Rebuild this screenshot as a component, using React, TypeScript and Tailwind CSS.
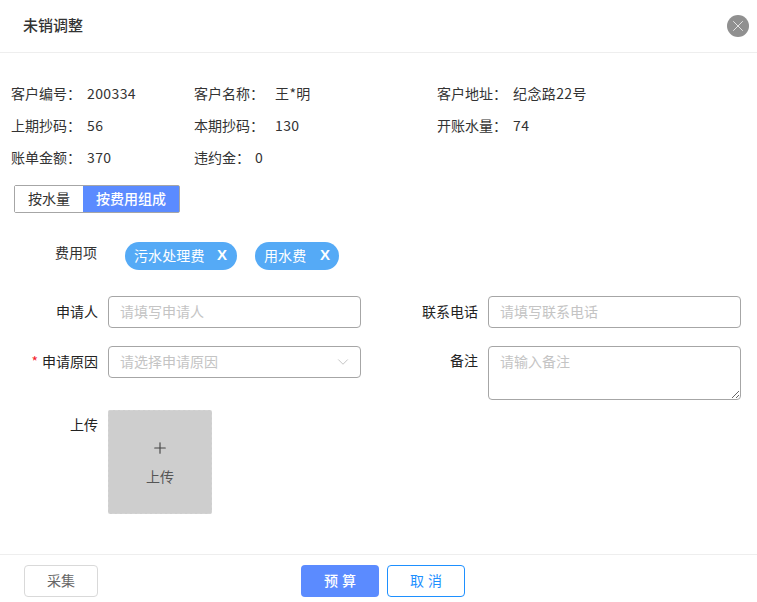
import React from "react";
import { ChevronDown, Plus, X } from "lucide-react";

const infoRows = [
  [
    ["客户编号：", "200334"],
    ["客户名称：", "王*明"],
    ["客户地址：", "纪念路22号"],
  ],
  [
    ["上期抄码：", "56"],
    ["本期抄码：", "130"],
    ["开账水量：", "74"],
  ],
  [
    ["账单金额：", "370"],
    ["违约金：", "0"],
  ],
];

const columnClasses = ["w-[183px]", "w-[243px]", "flex-1"];
const labelClasses = ["w-[76px]", "w-[81px]", "w-[76px]"];

const Tag = ({ label, className }: { label: string; className: string }) => (
  <div
    className={`flex h-[28px] items-center justify-between rounded-full bg-[#55aaf6] pb-[2px] pl-[9px] text-[14px] tracking-[0.1px] text-white ${className}`}
  >
    <span>{label}</span>
    <span className="font-bold font-['Liberation_Sans',sans-serif] text-[15px]">X</span>
  </div>
);

const App: React.FC = () => {
  return (
    <div className="flex h-[602px] w-[757px] flex-col overflow-hidden bg-white font-['Noto_Sans_CJK_SC','Noto_Sans',sans-serif] text-[14px] text-[#333]">
      {/* Header */}
      <div className="flex h-[53px] shrink-0 items-center justify-between border-b border-[#eeeeee] pb-[1px] pl-[23px] pr-[8px]">
        <span className="text-[15px] font-medium text-[#333]">未销调整</span>
        <button className="flex h-[22px] w-[22px] items-center justify-center rounded-full bg-[#909090] text-white">
          <X size={18} strokeWidth={1} />
        </button>
      </div>

      <div className="flex-1 pl-[11px] pr-[16px] pt-[24px]">
        {/* Bill info */}
        <div>
          {infoRows.map((row, i) => (
            <div key={i} className="flex h-[32px] items-center">
              {row.map(([label, value], j) => (
                <div key={label} className={`flex ${columnClasses[j]}`}>
                  <span className={`${i === 2 && j === 1 ? "w-[61px]" : labelClasses[j]} shrink-0`}>{label}</span>
                  <span className="tracking-[0.4px]">{value}</span>
                </div>
              ))}
            </div>
          ))}
        </div>

        {/* Mode switch */}
        <div className="ml-[3px] mt-[12px] flex h-[28px] w-[166px] rounded-[2px] border border-[#a6a6a6]">
          <button className="w-[68px] bg-white pb-[2px] text-[#333]">按水量</button>
          <button className="flex-1 bg-[#5b8bff] pb-[2px] font-medium text-white">按费用组成</button>
        </div>

        {/* Fee items */}
        <div className="mt-[29px] flex items-start">
          <span className="ml-[44px] mt-[-1px] w-[70px] leading-[22px]">费用项</span>
          <div className="flex gap-[18px]">
            <Tag label="污水处理费" className="w-[112px] pr-[10px]" />
            <Tag label="用水费" className="w-[84px] pr-[9px]" />
          </div>
        </div>

        {/* Form */}
        <div className="mt-[26px] grid grid-cols-[350px_380px]">
          <div>
            <div className="flex h-[32px] items-center">
              <label className="w-[97px] shrink-0 pb-[2px] pr-[10px] text-right text-[#222]">申请人</label>
              <input
                placeholder="请填写申请人"
                className="h-[32px] w-[253px] rounded-[4px] border border-[#a6a6a6] px-[11px] pb-[2px] text-[14px] outline-none placeholder:text-[#c4c4c4]"
              />
            </div>
            <div className="mt-[18px] flex h-[32px] items-center">
              <label className="w-[97px] shrink-0 pb-[2px] pr-[10px] text-right text-[#222]">
                <span className="mr-[4px] text-[#f5222d]">*</span>申请原因
              </label>
              <div className="flex h-[32px] w-[253px] items-center justify-between rounded-[4px] border border-[#a6a6a6] pl-[11px] pr-[8px] text-[#c4c4c4]">
                <span className="pb-[2px]">请选择申请原因</span>
                <ChevronDown size={18} strokeWidth={1} className="text-[#b0b0b0]" />
              </div>
            </div>
            <div className="mt-[32px] flex items-start">
              <label className="mt-[4px] w-[97px] shrink-0 pr-[10px] text-right text-[#222]">上传</label>
              <div className="flex h-[104px] w-[104px] flex-col items-center justify-center rounded-[2px] border border-dashed border-[#d4d4d4] bg-[#cecece] text-[#555]">
                <Plus size={18} strokeWidth={1.5} className="mt-[2px] text-[#444]" />
                <span className="mt-[9px]">上传</span>
              </div>
            </div>
          </div>

          <div>
            <div className="flex h-[32px] items-center">
              <label className="w-[127px] shrink-0 pb-[2px] pr-[10px] text-right text-[#222]">联系电话</label>
              <input
                placeholder="请填写联系电话"
                className="h-[32px] w-[253px] rounded-[4px] border border-[#a6a6a6] px-[11px] pb-[2px] text-[14px] outline-none placeholder:text-[#c4c4c4]"
              />
            </div>
            <div className="mt-[18px] flex items-start">
              <label className="mt-[4px] w-[127px] shrink-0 pr-[10px] text-right text-[#222]">备注</label>
              <textarea
                placeholder="请输入备注"
                className="h-[54px] w-[253px] rounded-[4px] border border-[#a6a6a6] px-[11px] py-[3px] text-[14px] leading-[22px] outline-none placeholder:text-[#c4c4c4]"
              />
            </div>
          </div>
        </div>
      </div>

      {/* Footer */}
      <div className="flex h-[48px] shrink-0 items-start border-t border-[#eeeeee] pl-[24px] pt-[10px]">
        <button className="h-[32px] w-[74px] rounded-[4px] border border-[#d9d9d9] bg-white pb-[2px] text-[#666]">采集</button>
        <button className="ml-[203px] h-[32px] w-[78px] rounded-[4px] bg-[#5b8bff] pb-[2px] pl-[4px] font-medium tracking-[4px] text-white">预算</button>
        <button className="ml-[8px] h-[32px] w-[78px] rounded-[4px] border border-[#1e90ff] bg-white pb-[2px] pl-[4px] tracking-[4px] text-[#1e90ff]">取消</button>
      </div>
    </div>
  );
};

export default App;
